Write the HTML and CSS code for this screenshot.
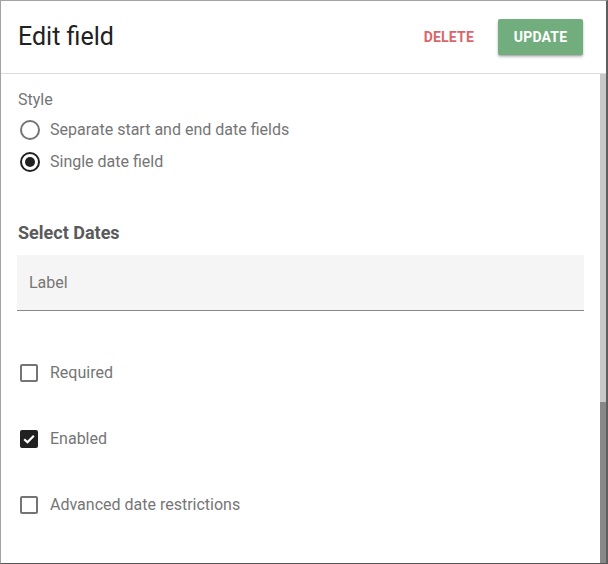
FILE: index.html
```html
<!DOCTYPE html>
<html>
<head>
<meta charset="utf-8">
<link rel="stylesheet" href="styles.css">
</head>
<body>
<div class="window">
  <header class="header">
    <h1 class="title">Edit field</h1>
    <div class="actions">
      <button class="btn-text">DELETE</button>
      <button class="btn-primary">UPDATE</button>
    </div>
  </header>
  <div class="main">
    <div class="content">
      <div class="group-label">Style</div>
      <div class="radio-group">
        <label class="row">
          <span class="icon"><span class="radio"></span></span>
          <span class="text">Separate start and end date fields</span>
        </label>
        <label class="row">
          <span class="icon"><span class="radio radio-on"><span class="dot"></span></span></span>
          <span class="text">Single date field</span>
        </label>
      </div>
      <h2 class="section-title">Select Dates</h2>
      <div class="field"><span class="field-label">Label</span></div>
      <div class="checks">
        <label class="check-row">
          <span class="icon icon-check"><span class="checkbox"></span></span>
          <span class="text">Required</span>
        </label>
        <label class="check-row">
          <span class="icon icon-check"><span class="checkbox checkbox-on"><svg width="14" height="14" viewBox="0 0 14 14"><path d="M2.2 7.2 L5.5 10.3 L11.8 3.8" fill="none" stroke="#fff" stroke-width="2.2"/></svg></span></span>
          <span class="text">Enabled</span>
        </label>
        <label class="check-row">
          <span class="icon icon-check"><span class="checkbox"></span></span>
          <span class="text">Advanced date restrictions</span>
        </label>
      </div>
    </div>
    <div class="scrollbar"><div class="thumb"></div></div>
  </div>
</div>
</body>
</html>
```

FILE: styles.css
```css
* { box-sizing: border-box; }
html, body { margin: 0; padding: 0; background: #fff; }
body { font-family: Roboto, "Noto Sans", sans-serif; }

.window {
  width: 608px;
  height: 564px;
  border-top: 1px solid #a2a2a2;
  border-left: 1px solid #a2a2a2;
  border-right: 2px solid #5e5e5e;
  border-bottom: 1px solid #555;
  display: flex;
  flex-direction: column;
  overflow: hidden;
}

.header {
  height: 73px;
  flex: none;
  border-bottom: 1px solid #dcdcdc;
  display: flex;
  align-items: center;
  justify-content: space-between;
  padding: 0 23px 0 17px;
}
.title {
  margin: 0;
  font-size: 25px;
  line-height: 30px;
  font-weight: 400;
  color: #212121;
}
.actions { display: flex; align-items: center; gap: 16px; }
.btn-text, .btn-primary {
  font-family: Roboto, sans-serif;
  font-size: 14px;
  font-weight: 700;
  letter-spacing: 0.2px;
  border: none;
  cursor: pointer;
}
.btn-text {
  background: none;
  color: #d9676a;
  padding: 8px 8px;
}
.btn-primary {
  background: #72ad7d;
  color: #fff;
  height: 36px;
  width: 85px;
  padding: 0;
  border-radius: 2px;
  box-shadow: 0 2px 3px rgba(0,0,0,0.25), 0 1px 1px rgba(0,0,0,0.12);
}

.main { flex: 1; display: flex; min-height: 0; }
.content { flex: 1; padding: 16px 16px 0 16px; }
.scrollbar {
  width: 6px;
  flex: none;
  background: #c8c8c8;
  display: flex;
  flex-direction: column;
  justify-content: flex-end;
}
.thumb { height: 161px; background: #888; }

.group-label {
  font-size: 16px;
  line-height: 20px;
  color: #757575;
  padding-left: 1px;
}
.radio-group { margin-top: 4px; }
.row, .check-row { display: flex; align-items: center; gap: 7px; }
.row { height: 32px; }
.check-row { height: 66px; }
.icon { width: 26px; display: flex; justify-content: center; align-items: center; }
.icon-check { width: 24px; margin-right: 2px; }
.text { font-size: 16px; line-height: 20px; color: #757575; }

.radio {
  width: 20px; height: 20px;
  border: 2px solid #757575;
  border-radius: 50%;
  display: flex; align-items: center; justify-content: center;
}
.radio-on { border-color: #212121; }
.dot { width: 10px; height: 10px; border-radius: 50%; background: #212121; }

.section-title {
  margin: 43px 0 0 1px;
  font-size: 18px;
  line-height: 24px;
  font-weight: 700;
  color: #5a5a5a;
}
.field {
  margin-top: 10px;
  height: 56px;
  background: #f5f5f5;
  border-bottom: 1px solid #8a8a8a;
  display: flex;
  align-items: center;
  padding-left: 12px;
}
.field-label { font-size: 16px; line-height: 20px; color: #757575; }

.checks { margin-top: 29px; }
.checkbox {
  width: 18px; height: 18px;
  border: 2px solid #757575;
  border-radius: 2px;
  display: flex; align-items: center; justify-content: center;
}
.checkbox-on { background: #212121; border-color: #212121; }
.checkbox svg { display: block; }
```
